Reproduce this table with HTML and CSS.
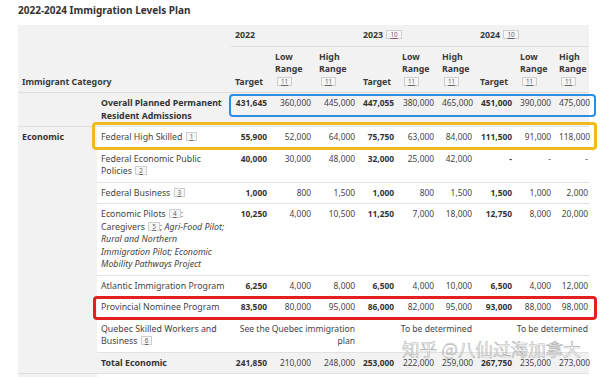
FILE: index.html
```html
<!DOCTYPE html>
<html lang="en">
<head>
<meta charset="utf-8">
<title>2022-2024 Immigration Levels Plan</title>
<link rel="stylesheet" href="styles.css">
</head>
<body>
<div class="page">
  <h2 class="caption">2022-2024 Immigration Levels Plan</h2>
  <div class="wrap">
    <table class="plan">
      <colgroup>
        <col class="c-cat"><col class="c-prog">
        <col class="c40"><col class="c44"><col class="c44">
        <col class="c39"><col class="c40"><col class="c38">
        <col class="c40"><col class="c39"><col class="c34">
      </colgroup>
      <thead>
        <tr class="h1">
          <th class="cat" colspan="2" rowspan="2">Immigrant Category</th>
          <th class="year" colspan="3">2022</th>
          <th class="year" colspan="3">2023 <span class="fn">10</span></th>
          <th class="year" colspan="3">2024 <span class="fn">10</span></th>
        </tr>
        <tr class="h2">
          <th>Target</th><th>Low<br>Range<br><span class="fn">11</span></th><th>High<br>Range<br><span class="fn">11</span></th>
          <th>Target</th><th>Low<br>Range<br><span class="fn">11</span></th><th>High<br>Range<br><span class="fn">11</span></th>
          <th>Target</th><th>Low<br>Range<br><span class="fn">11</span></th><th class="last">High<br>Range<br><span class="fn">11</span></th>
        </tr>
      </thead>
      <tbody>
        <tr class="grey">
          <td class="cat"></td>
          <td class="prog b">Overall Planned Permanent Resident Admissions</td>
          <td class="b">431,645</td><td>360,000</td><td>445,000</td>
          <td class="b">447,055</td><td>380,000</td><td>465,000</td>
          <td class="b">451,000</td><td>390,000</td><td class="last">475,000</td>
        </tr>
        <tr>
          <td class="cat b" rowspan="8">Economic</td>
          <td class="prog">Federal High Skilled <span class="fn">1</span></td>
          <td class="b">55,900</td><td>52,000</td><td>64,000</td>
          <td class="b">75,750</td><td>63,000</td><td>84,000</td>
          <td class="b">111,500</td><td>91,000</td><td class="last">118,000</td>
        </tr>
        <tr>
          <td class="prog">Federal Economic Public Policies <span class="fn">2</span></td>
          <td class="b">40,000</td><td>30,000</td><td>48,000</td>
          <td class="b">32,000</td><td>25,000</td><td>42,000</td>
          <td class="b">-</td><td>-</td><td class="last">-</td>
        </tr>
        <tr>
          <td class="prog">Federal Business <span class="fn">3</span></td>
          <td class="b">1,000</td><td>800</td><td>1,500</td>
          <td class="b">1,000</td><td>800</td><td>1,500</td>
          <td class="b">1,500</td><td>1,000</td><td class="last">2,000</td>
        </tr>
        <tr>
          <td class="prog nowrap">Economic Pilots <span class="fn">4</span>:<br>Caregivers <span class="fn">5</span>; <i>Agri-Food Pilot;</i><br><i>Rural and Northern</i><br><i>Immigration Pilot; Economic</i><br><i>Mobility Pathways Project</i></td>
          <td class="b">10,250</td><td>4,000</td><td>10,500</td>
          <td class="b">11,250</td><td>7,000</td><td>18,000</td>
          <td class="b">12,750</td><td>8,000</td><td class="last">20,000</td>
        </tr>
        <tr>
          <td class="prog nowrap">Atlantic Immigration Program</td>
          <td class="b">6,250</td><td>4,000</td><td>8,000</td>
          <td class="b">6,500</td><td>4,000</td><td>10,000</td>
          <td class="b">6,500</td><td>4,000</td><td class="last">12,000</td>
        </tr>
        <tr>
          <td class="prog">Provincial Nominee Program</td>
          <td class="b">83,500</td><td>80,000</td><td>95,000</td>
          <td class="b">86,000</td><td>82,000</td><td>95,000</td>
          <td class="b">93,000</td><td>88,000</td><td class="last">98,000</td>
        </tr>
        <tr>
          <td class="prog">Quebec Skilled Workers and Business <span class="fn">6</span></td>
          <td colspan="3">See the Quebec immigration plan</td>
          <td colspan="3">To be determined</td>
          <td colspan="3" class="last">To be determined</td>
        </tr>
        <tr class="grey">
          <td class="prog b">Total Economic</td>
          <td class="b">241,850</td><td>210,000</td><td>248,000</td>
          <td class="b">253,000</td><td>222,000</td><td>259,000</td>
          <td class="b">267,750</td><td>235,000</td><td class="last">273,000</td>
        </tr>
        <tr class="next">
          <td class="cat"></td>
          <td class="prog"></td>
          <td></td><td></td><td></td>
          <td></td><td></td><td></td>
          <td></td><td></td><td class="last"></td>
        </tr>
      </tbody>
    </table>
    <div class="hl hl-blue"></div>
    <div class="hl hl-yellow"></div>
    <div class="hl hl-red"></div>
    <div class="watermark">知乎 @八仙过海加拿大</div>
  </div>
</div>
</body>
</html>
```
FILE: styles.css
```css
html, body {
  margin: 0;
  padding: 0;
  background: #ffffff;
}
body {
  font-family: "Noto Sans", "Open Sans", "DejaVu Sans", sans-serif;
  color: #333333;
  overflow: hidden;
}
.page {
  padding: 3px 0 0 18px;
}
.caption {
  margin: 0 0 7px 0;
  font-size: 10px;
  line-height: 15px;
  font-weight: 700;
  color: #333333;
}
.wrap {
  position: relative;
  width: 571px;
}
.plan {
  width: 571px;
  table-layout: fixed;
  border-collapse: collapse;
  font-size: 8.4px;
  line-height: 12.5px;
}
.c-cat { width: 79px; }
.c-prog { width: 134px; }
.c40 { width: 40px; }
.c44 { width: 44px; }
.c39 { width: 39px; }
.c38 { width: 38px; }
.c34 { width: 34px; }

.plan th, .plan td {
  padding: 4px 4px 4px 4px;
  vertical-align: top;
}
.plan thead th {
  background: #f2f2f2;
  text-align: left;
  font-weight: 700;
  font-size: 8.8px;
  color: #3a3a3a;
}
.plan thead .cat {
  vertical-align: bottom;
  border-bottom: 1px solid #dcdcdc;
}
.plan .h1 .year {
  border-bottom: 1px solid #dedede;
}
.plan .h2 th {
  vertical-align: bottom;
  border-bottom: 1px solid #dcdcdc;
}
.plan tbody td {
  text-align: right;
  border-top: 1px solid #e2e2e2;
  color: #444444;
  white-space: nowrap;
}
.plan tbody td[colspan] {
  white-space: normal;
  font-size: 8.6px;
}
.plan tbody td.prog {
  text-align: left;
  padding-right: 2px;
  white-space: normal;
  font-size: 8.8px;
}
.plan tbody td.prog.nowrap {
  white-space: nowrap;
}
.plan tbody td.cat {
  text-align: left;
  background: #f2f2f2;
  border-top: 1px solid #dcdcdc;
  font-size: 8.8px;
}
.plan .last {
  padding-right: 1px;
}
.plan tbody tr.grey td {
  background: #f2f2f2;
}
.plan tbody tr.next td {
  height: 20px;
}
.plan .b {
  font-weight: 700;
  color: #333333;
}
.plan i {
  font-style: italic;
}
.fn {
  display: inline-block;
  font-size: 6.3px;
  line-height: 7px;
  font-weight: 400;
  padding: 0 3px;
  margin-left: 1px;
  border: 1px solid #cfcfcf;
  background: #f6f6f6;
  color: #666666;
  text-decoration: underline;
  vertical-align: 1px;
}
.h2 .fn {
  margin-left: 2px;
}

.hl {
  position: absolute;
  box-sizing: border-box;
  border-radius: 4px;
  pointer-events: none;
}
.hl-blue {
  left: 211px;
  top: 69px;
  width: 367px;
  height: 23px;
  border: 2.5px solid #2a8fe0;
}
.hl-yellow {
  left: 74px;
  top: 97px;
  width: 505px;
  height: 28px;
  border: 3px solid #f4b821;
}
.hl-red {
  left: 75px;
  top: 271px;
  width: 504px;
  height: 24px;
  border: 3px solid #e3201f;
}
.watermark {
  position: absolute;
  left: 384px;
  top: 313px;
  font-family: "Noto Sans CJK SC", "Noto Sans", sans-serif;
  font-size: 17.6px;
  line-height: 22px;
  white-space: nowrap;
  color: rgba(255, 255, 255, 0.75);
  -webkit-text-stroke: 0.6px rgba(110, 110, 110, 0.55);
  pointer-events: none;
}
```
